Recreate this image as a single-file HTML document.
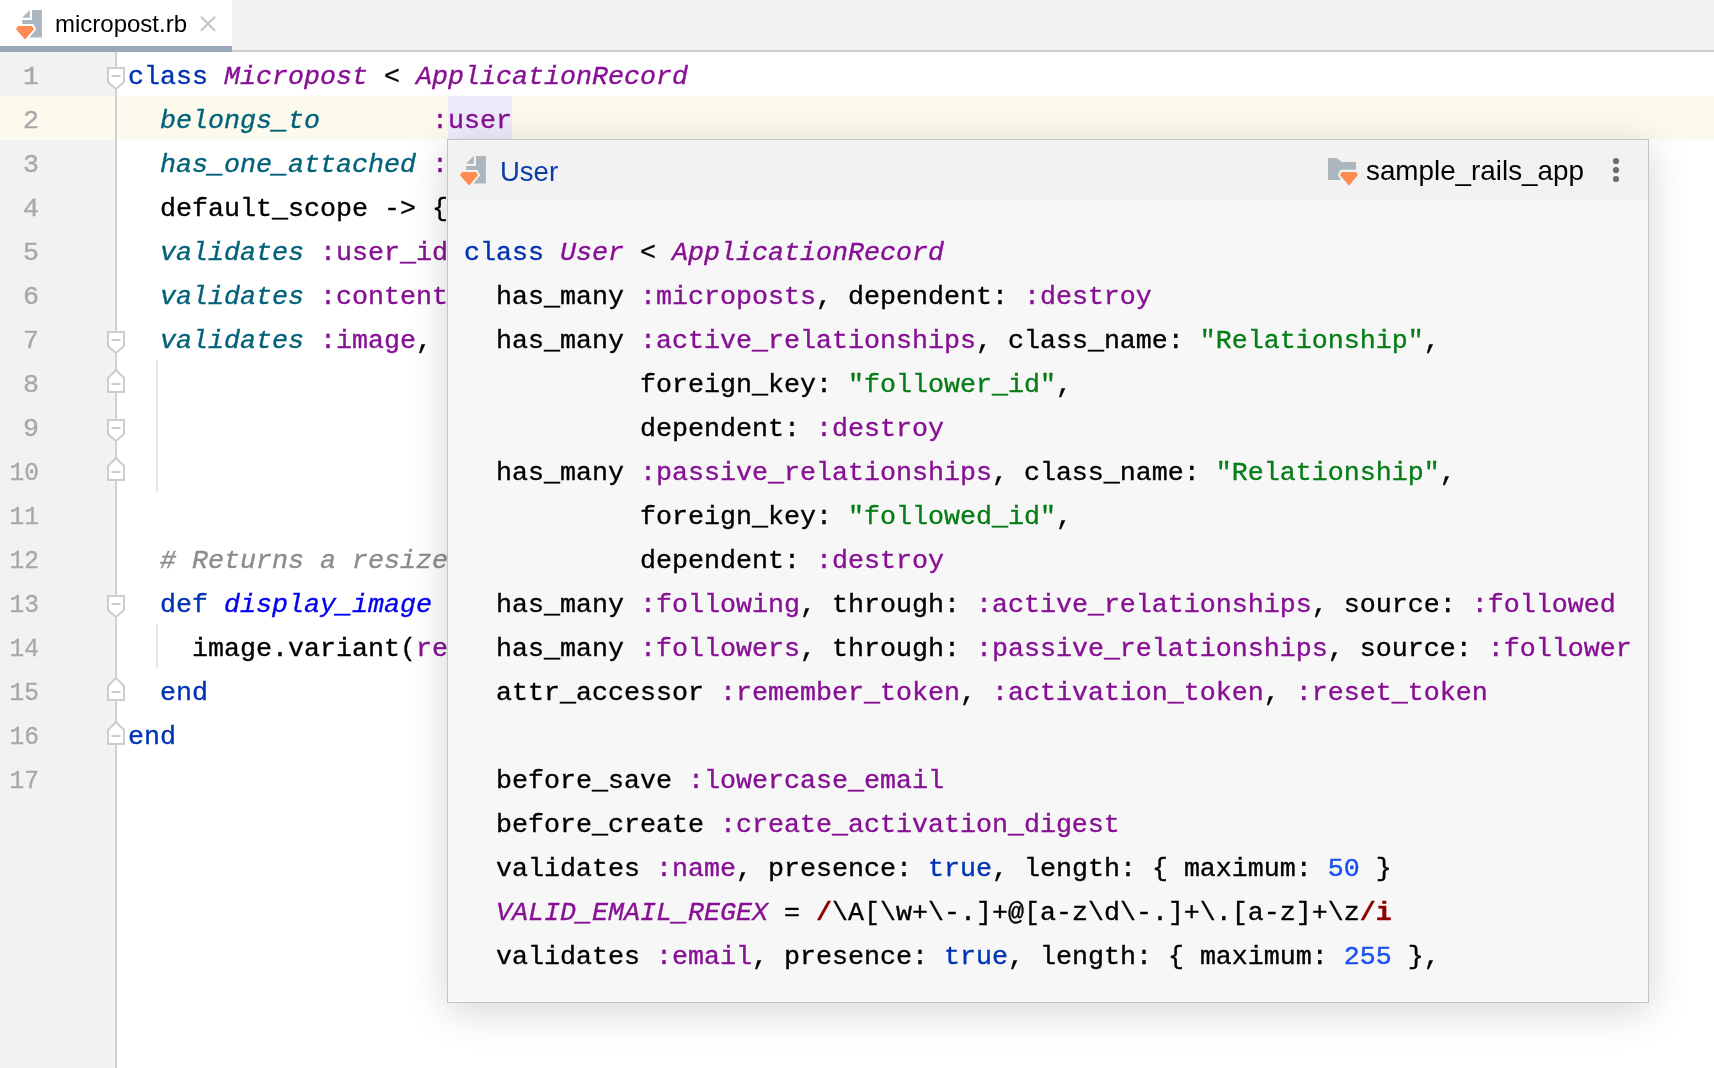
<!DOCTYPE html>
<html><head><meta charset="utf-8">
<style>
html,body{margin:0;padding:0;}
#tabtext,#code,#nums,#popup{will-change:transform;}
body{width:1714px;height:1068px;overflow:hidden;position:relative;background:#fff;font-family:"Liberation Sans",sans-serif;}
#tabbar{position:absolute;left:0;top:0;width:1714px;height:50px;background:#f2f2f2;border-bottom:2px solid #cdcdcd;}
#tab{position:absolute;left:0;top:0;width:232px;height:46px;background:#fff;border-bottom:6px solid #9aa7ba;}
#tabtext{position:absolute;left:55px;top:10px;font-size:24px;line-height:28px;color:#000;white-space:pre;}
#gutter{position:absolute;left:0;top:52px;width:116px;height:1016px;background:#f2f2f2;}
#gline{position:absolute;left:115px;top:52px;width:2px;height:1016px;background:#d0d0d0;}
.mono{font-family:"Liberation Mono",monospace;font-size:26.667px;line-height:44px;white-space:pre;-webkit-text-stroke:0.35px currentColor;}
#nums{position:absolute;left:0;top:55px;width:39px;text-align:right;color:#a8a8a8;}
#code{position:absolute;left:128px;top:55px;color:#000;}
#curline{position:absolute;left:0;top:96px;width:1714px;height:44px;background:#fcfaed;}
#hl{position:absolute;left:448px;top:96px;width:64px;height:44px;background:#edebfc;}
.n2{display:inline-block;transform:scaleX(0.92);transform-origin:100% 50%;}
.guide{position:absolute;width:2px;background:#e6e6e6;}
.kw{color:#0033b3;}
.cn{color:#871094;font-style:italic;}
.sy{color:#871094;}
.me{color:#00627a;font-style:italic;}
.fn{color:#0000f2;font-style:italic;}
.cm{color:#8c8c8c;font-style:italic;}
.st{color:#067d17;}
.nu{color:#1750eb;}
.rx{color:#8c0000;font-weight:bold;}
svg.abs{position:absolute;left:0;top:0;}
#folds path{fill:#fff;stroke:#cdcdcd;stroke-width:2;}
#folds path.mi{fill:none;}
#popup{position:absolute;left:447px;top:139px;width:1200px;height:862px;background:#f7f7f7;border:1px solid #c4c4c4;box-shadow:0 8px 38px rgba(0,0,0,0.17);}
#phead{position:absolute;left:0;top:0;width:1200px;height:60px;background:#f2f2f2;}
#ptitle{position:absolute;left:52px;top:16px;font-size:27.5px;line-height:32px;color:#0a3ba8;}
#pproj{position:absolute;left:918px;top:15px;font-size:27.8px;line-height:32px;color:#000;}
#pcode{position:absolute;left:16px;top:91px;color:#000;}
</style></head>
<body>
<div id="tabbar"></div>
<div id="tab"></div>
<svg class="abs" width="232" height="52"><path fill="#abb6bf" d="M22.2 17.7L29.8 10.1V17.7Z"/>
<path fill="#abb6bf" d="M32 10.1H41.9V37.6H29.5L36.2 29.2L33.4 23.9H22.2V19.9H32Z"/>
<path fill="#ff8a52" d="M18 26.1H32L34 29.2L25 39.6L16 29.2Z"/>
<path d="M201.6 17.3L214.4 30.1M214.4 17.3L201.6 30.1" stroke="#bdc5c8" stroke-width="2" stroke-linecap="square" fill="none"/></svg>
<div id="tabtext">micropost.rb</div>
<div id="gutter"></div>
<div id="curline"></div>
<div id="hl"></div>
<div id="gline"></div>
<div class="guide" style="left:156px;top:360px;height:132px;"></div>
<div class="guide" style="left:156px;top:624px;height:44px;"></div>
<svg id="folds" class="abs" width="140" height="1068">
<path d="M108 68H124V82L116 89L108 82Z"/><path class="mi" d="M111.5 76H120.5"/>
<path d="M108 332H124V346L116 353L108 346Z"/><path class="mi" d="M111.5 340H120.5"/>
<path d="M108 392H124V378L116 370L108 378Z"/><path class="mi" d="M111.5 384H120.5"/>
<path d="M108 420H124V434L116 441L108 434Z"/><path class="mi" d="M111.5 428H120.5"/>
<path d="M108 480H124V466L116 458L108 466Z"/><path class="mi" d="M111.5 472H120.5"/>
<path d="M108 596H124V610L116 617L108 610Z"/><path class="mi" d="M111.5 604H120.5"/>
<path d="M108 700H124V686L116 678L108 686Z"/><path class="mi" d="M111.5 692H120.5"/>
<path d="M108 744H124V730L116 722L108 730Z"/><path class="mi" d="M111.5 736H120.5"/>
</svg>
<div id="nums" class="mono">1
2
3
4
5
6
7
8
9
<span class="n2">10</span>
<span class="n2">11</span>
<span class="n2">12</span>
<span class="n2">13</span>
<span class="n2">14</span>
<span class="n2">15</span>
<span class="n2">16</span>
<span class="n2">17</span></div>
<div id="code" class="mono"><span class="kw">class</span> <span class="cn">Micropost</span> &lt; <span class="cn">ApplicationRecord</span>
  <span class="me">belongs_to</span>       <span class="sy">:user</span>
  <span class="me">has_one_attached</span> <span class="sy">:image</span>
  default_scope -&gt; { order(<span class="sy">created_at:</span> <span class="sy">:desc</span>) }
  <span class="me">validates</span> <span class="sy">:user_id</span>, <span class="sy">presence:</span> <span class="kw">true</span>
  <span class="me">validates</span> <span class="sy">:content</span>, <span class="sy">presence:</span> <span class="kw">true</span>
  <span class="me">validates</span> <span class="sy">:image</span>,




  <span class="cm"># Returns a resized image for display.</span>
  <span class="kw">def</span> <span class="fn">display_image</span>
    image.variant(<span class="sy">resize_to_limit:</span> [500, 500])
  <span class="kw">end</span>
<span class="kw">end</span>
</div>
<div id="popup">
<div id="phead"></div>
<div id="ptitle">User</div>
<div id="pproj">sample_rails_app</div>
<div id="pcode" class="mono"><span class="kw">class</span> <span class="cn">User</span> &lt; <span class="cn">ApplicationRecord</span>
  has_many <span class="sy">:microposts</span>, dependent: <span class="sy">:destroy</span>
  has_many <span class="sy">:active_relationships</span>, class_name: <span class="st">"Relationship"</span>,
           foreign_key: <span class="st">"follower_id"</span>,
           dependent: <span class="sy">:destroy</span>
  has_many <span class="sy">:passive_relationships</span>, class_name: <span class="st">"Relationship"</span>,
           foreign_key: <span class="st">"followed_id"</span>,
           dependent: <span class="sy">:destroy</span>
  has_many <span class="sy">:following</span>, through: <span class="sy">:active_relationships</span>, source: <span class="sy">:followed</span>
  has_many <span class="sy">:followers</span>, through: <span class="sy">:passive_relationships</span>, source: <span class="sy">:follower</span>
  attr_accessor <span class="sy">:remember_token</span>, <span class="sy">:activation_token</span>, <span class="sy">:reset_token</span>

  before_save <span class="sy">:lowercase_email</span>
  before_create <span class="sy">:create_activation_digest</span>
  validates <span class="sy">:name</span>, presence: <span class="kw">true</span>, length: { maximum: <span class="nu">50</span> }
  <span class="cn">VALID_EMAIL_REGEX</span> = <span class="rx">/</span>\A[\w+\-.]+@[a-z\d\-.]+\.[a-z]+\z<span class="rx">/i</span>
  validates <span class="sy">:email</span>, presence: <span class="kw">true</span>, length: { maximum: <span class="nu">255</span> },</div>
<svg class="abs" width="1200" height="60">
<g transform="translate(-4,6)"><path fill="#abb6bf" d="M22.2 17.7L29.8 10.1V17.7Z"/>
<path fill="#abb6bf" d="M32 10.1H41.9V37.6H29.5L36.2 29.2L33.4 23.9H22.2V19.9H32Z"/>
<path fill="#ff8a52" d="M18 26.1H32L34 29.2L25 39.6L16 29.2Z"/></g>
<g fill="#abb6bf"><path d="M880 18.1H888.4L894 21.9H908V29.8H892.4L889.8 35.2L893.1 39.9H880Z"/></g>
<path fill="#ff8a52" d="M893.8 32.1H908.3L909.9 35L901 45.7L891.9 35Z"/>
<circle cx="1168" cy="21" r="3.1" fill="#6e6e6e"/><circle cx="1168" cy="30" r="3.1" fill="#6e6e6e"/><circle cx="1168" cy="39" r="3.1" fill="#6e6e6e"/>
</svg>
</div>
</body></html>
